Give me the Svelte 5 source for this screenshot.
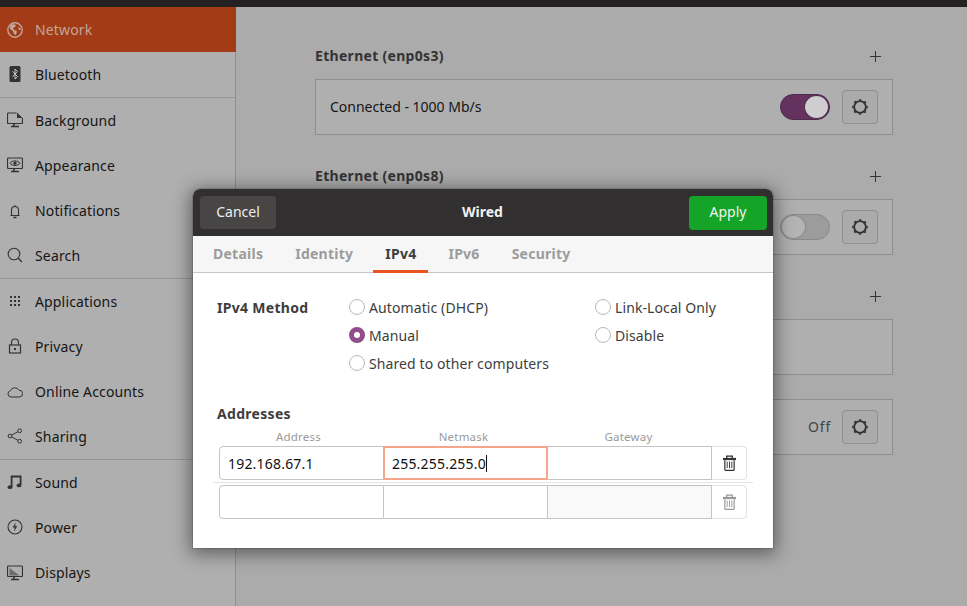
<script>
  const groups = [
    [
      { name: 'Network', icon: 'globe', active: true },
      { name: 'Bluetooth', icon: 'bluetooth', sep: true }
    ],
    [
      { name: 'Background', icon: 'background' },
      { name: 'Appearance', icon: 'appearance' },
      { name: 'Notifications', icon: 'bell' },
      { name: 'Search', icon: 'search', sep: true }
    ],
    [
      { name: 'Applications', icon: 'grid' },
      { name: 'Privacy', icon: 'lock' },
      { name: 'Online Accounts', icon: 'cloud' },
      { name: 'Sharing', icon: 'share', sep: true }
    ],
    [
      { name: 'Sound', icon: 'note' },
      { name: 'Power', icon: 'power' },
      { name: 'Displays', icon: 'display' }
    ]
  ];
  const tabs = ['Details', 'Identity', 'IPv4', 'IPv6', 'Security'];
  const methodsLeft = [
    { label: 'Automatic (DHCP)' },
    { label: 'Manual', on: true },
    { label: 'Shared to other computers' }
  ];
  const methodsRight = [{ label: 'Link-Local Only' }, { label: 'Disable' }];
</script>

{#snippet gear()}
  <svg width="18" height="18" viewBox="0 0 18 18" fill="none" stroke="#303030">
    <circle cx="9" cy="9" r="5.9" stroke-width="1.9" />
    <circle cx="9" cy="9" r="7.2" stroke-width="1.3" stroke-dasharray="2.2 3.45" stroke-dashoffset="1.1" />
  </svg>
{/snippet}

{#snippet trash()}
  <svg width="13" height="16" viewBox="0 0 14 17" fill="none" stroke="currentColor" stroke-width="1">
    <path d="M0 4.2h14" stroke-width="2.4" />
    <path d="M4 3V1h6v2" stroke-width="1.4" />
    <path d="M2 5.5v10a1 1 0 0 0 1 1h8a1 1 0 0 0 1-1v-10" stroke-width="1.3" />
    <path d="M4.5 7v7M7 7v7M9.5 7v7" />
  </svg>
{/snippet}

{#snippet sideIcon(kind)}
  <svg width="16" height="16" viewBox="0 0 16 16" fill="none" stroke="currentColor" stroke-width="1">
    {#if kind === 'globe'}
      <circle cx="8" cy="8" r="7.2" stroke-width="1.4" />
      <path d="M3 4l3-2 3 1-1 2-2 1 1 2 3 1-1 4-2-1-1-3-3-2zM11 5l2 1 1 2-2 0z" fill="currentColor" stroke="none" />
    {:else if kind === 'bluetooth'}
      <rect x="2.5" y="0" width="11" height="16" rx="1.5" fill="currentColor" stroke="none" />
      <path d="M5.5 5.2l5 5.4L8 13V3l2.5 2.4-5 5.4" stroke="#c8c8c8" />
    {:else if kind === 'background'}
      <path d="M9.5 1H1.5A1 1 0 0 0 .5 2v8.5a1 1 0 0 0 1 1h13a1 1 0 0 0 1-1V6" stroke-width="1.2" />
      <path d="M10 .5l5.5 5.5h-5.5z" fill="currentColor" stroke="none" />
      <path d="M7 12v2M4 14.5h8" stroke-width="1.6" />
    {:else if kind === 'appearance'}
      <rect x=".5" y="1" width="15" height="10.5" rx="1" stroke-width="1.2" />
      <path d="M3 6.2c2-3 8-3 10 0-2 3-8 3-10 0z" />
      <circle cx="8" cy="6.2" r="1.6" fill="currentColor" stroke="none" />
      <path d="M7 12v2M4 14.5h8" stroke-width="1.6" />
    {:else if kind === 'bell'}
      <path d="M3.5 12.5h9M4.5 12V7a3.5 3.5 0 0 1 7 0v5M8 2v1.5" stroke-width="1.1" />
      <path d="M6.5 14.5h3" stroke-width="1.6" />
    {:else if kind === 'search'}
      <circle cx="7" cy="7" r="5.8" stroke-width="1.1" />
      <path d="M11.2 11.2L15 15" stroke-width="1.3" />
    {:else if kind === 'grid'}
      <path d="M3 3h2v2h-2zM7 3h2v2h-2zM11 3h2v2h-2zM3 7h2v2h-2zM7 7h2v2h-2zM11 7h2v2h-2zM3 11h2v2h-2zM7 11h2v2h-2zM11 11h2v2h-2z" fill="currentColor" stroke="none" />
    {:else if kind === 'lock'}
      <rect x="2.5" y="7" width="11" height="8" stroke-width="1.2" />
      <path d="M4.5 7V4.5a3.5 3.5 0 0 1 7 0V7" stroke-width="1.1" />
      <rect x="7" y="10" width="2" height="2" fill="currentColor" stroke="none" />
    {:else if kind === 'cloud'}
      <path d="M4 13a3.2 3.2 0 0 1-.6-6.3A4.8 4.8 0 0 1 12 6.2 3.4 3.4 0 0 1 12.4 13z" stroke-width="1" />
    {:else if kind === 'share'}
      <circle cx="3" cy="8" r="1.9" />
      <circle cx="12.6" cy="2.8" r="1.9" />
      <circle cx="12.6" cy="13.2" r="1.9" />
      <path d="M4.7 7.1l6.2-3.4M4.7 8.9l6.2 3.4" />
    {:else if kind === 'note'}
      <path d="M4.6 13V2.5h9V11" stroke-width="1.8" />
      <ellipse cx="3" cy="13.2" rx="2.4" ry="1.9" fill="currentColor" stroke="none" />
      <ellipse cx="12" cy="11.4" rx="2.4" ry="1.9" fill="currentColor" stroke="none" />
    {:else if kind === 'power'}
      <circle cx="8" cy="8" r="7" stroke-width="1.1" />
      <path d="M8.6 3.5L5.6 8.6h2l-.4 3.9 3-5.2h-2z" fill="currentColor" stroke="none" />
    {:else if kind === 'display'}
      <rect x=".5" y="1" width="15" height="10.5" rx="1" stroke-width="1.2" />
      <path d="M2.5 3l10 7.5h-10z" fill="currentColor" stroke="none" opacity=".55" />
      <path d="M7 12v2M4 14.5h8" stroke-width="1.6" />
    {/if}
  </svg>
{/snippet}

{#snippet radio(item)}
  <div class="radio-row">
    <span class="radio" class:on={item.on}></span>
    <span>{item.label}</span>
  </div>
{/snippet}

<div class="topbar"></div>
<div class="window">
  <nav class="sidebar">
    {#each groups as group}
      {#each group as row}
        <div class="side-row" class:active={row.active} class:sep={row.sep}>
          <span class="side-icon">{@render sideIcon(row.icon)}</span>
          <span>{row.name}</span>
        </div>
      {/each}
    {/each}
  </nav>

  <main class="content">
    <section>
      <header><h2>Ethernet (enp0s3)</h2><span class="plus"></span></header>
      <div class="box">
        <span class="status">Connected - 1000 Mb/s</span>
        <span class="switch on"><i></i></span>
        <span class="gear">{@render gear()}</span>
      </div>
    </section>
    <section>
      <header><h2>Ethernet (enp0s8)</h2><span class="plus"></span></header>
      <div class="box">
        <span class="switch"><i></i></span>
        <span class="gear">{@render gear()}</span>
      </div>
    </section>
    <section>
      <header><h2></h2><span class="plus"></span></header>
      <div class="box"></div>
    </section>
    <section class="last">
      <div class="box">
        <span class="off">Off</span>
        <span class="gear">{@render gear()}</span>
      </div>
    </section>
  </main>
</div>

<div class="dialog">
  <div class="titlebar">
    <button class="cancel">Cancel</button>
    <span class="title">Wired</span>
    <button class="apply">Apply</button>
  </div>
  <div class="tabs">
    {#each tabs as tab}
      <span class="tab" class:current={tab === 'IPv4'}>{tab}</span>
    {/each}
  </div>
  <div class="body">
    <div class="method">
      <span class="label">IPv4 Method</span>
      <div class="radio-col left">
        {#each methodsLeft as item}{@render radio(item)}{/each}
      </div>
      <div class="radio-col">
        {#each methodsRight as item}{@render radio(item)}{/each}
      </div>
    </div>
    <div class="label addresses">Addresses</div>
    <div class="col-heads">
      <span>Address</span><span>Netmask</span><span>Gateway</span>
    </div>
    <div class="addr-row">
      <div class="cell first">192.168.67.1</div>
      <div class="cell focus">255.255.255.0<b class="caret"></b></div>
      <div class="cell"></div>
      <div class="del">{@render trash()}</div>
    </div>
    <div class="row-line"></div>
    <div class="addr-row">
      <div class="cell first"></div>
      <div class="cell"></div>
      <div class="cell disabled"></div>
      <div class="del dim">{@render trash()}</div>
    </div>
  </div>
</div>

<style>
  :global(body) {
    margin: 0;
    overflow: hidden;
    background: #ababab;
  }

  * {
    box-sizing: border-box;
  }

  .topbar {
    height: 7px;
    background: #232122;
  }

  .window {
    display: flex;
    height: 599px;
    font-family: "Noto Sans", sans-serif;
    font-size: 14px;
    color: #151515;
  }

  /* sidebar */
  .sidebar {
    width: 236px;
    flex: none;
    background: #afafaf;
    border-right: 1px solid #8f8f8f;
    letter-spacing: 0.15px;
  }

  .side-row {
    display: flex;
    align-items: center;
    height: 45.25px;
    padding-left: 7px;
    gap: 12px;
  }

  .side-row.sep {
    border-bottom: 1px solid #969696;
  }

  .side-row.active {
    background: #a23b16;
    color: #c0a79b;
    margin-right: -1px;
  }

  .side-icon {
    display: flex;
    color: #333;
  }

  .active .side-icon {
    color: #c0a79b;
  }

  /* network panel */
  .content {
    flex: 1;
    padding: 0 74px 0 79px;
    background: #ababab;
  }

  section {
    padding-top: 30px;
  }

  section:first-child {
    padding-top: 38px;
  }

  section.last {
    padding-top: 24px;
  }

  section header {
    display: flex;
    align-items: center;
    justify-content: space-between;
    height: 20px;
    margin-bottom: 14px;
  }

  h2 {
    margin: 0;
    font-size: 14px;
    font-weight: 700;
    letter-spacing: 0.3px;
    color: #333;
  }

  .plus {
    width: 11px;
    height: 11px;
    margin: 3px 12px 0 0;
    background:
      linear-gradient(#333, #333) center / 100% 1px no-repeat,
      linear-gradient(#333, #333) center / 1px 100% no-repeat;
  }

  .box {
    display: flex;
    align-items: center;
    justify-content: flex-end;
    height: 56px;
    padding: 0 14px;
    border: 1px solid #8e8e8e;
    background: #afafaf;
  }

  .status {
    margin: 0 auto 2px 0;
  }

  .off {
    margin: 0 11px 2px 0;
    letter-spacing: 0.8px;
    color: #444;
  }

  .switch {
    display: flex;
    width: 50px;
    height: 26px;
    margin-right: 12px;
    border: 1px solid #8a8a8a;
    border-radius: 13px;
    background: #9c9c9c;
  }

  .switch i {
    width: 25px;
    height: 24px;
    border-radius: 50%;
    background: #b4b4b4;
    border: 1px solid #8a8a8a;
  }

  .switch.on {
    justify-content: flex-end;
    background: #63325f;
    border-color: #4f2a4c;
  }

  .switch.on i {
    background: #cfcdcf;
    border-color: #4f2a4c;
  }

  .gear {
    display: flex;
    align-items: center;
    justify-content: center;
    width: 36px;
    height: 34px;
    border: 1px solid #8f8f8f;
    border-radius: 4px;
    background: #ababab;
  }

  /* dialog */
  .dialog {
    position: absolute;
    left: 193px;
    top: 189px;
    width: 580px;
    height: 359px;
    display: flex;
    flex-direction: column;
    border-radius: 7px 7px 0 0;
    background: #fff;
    box-shadow: 0 3px 18px 3px rgba(0, 0, 0, 0.45), 0 0 0 1px rgba(0, 0, 0, 0.12);
    font-family: "Noto Sans", sans-serif;
    font-size: 14px;
    color: #3d3d3d;
    overflow: hidden;
  }

  .titlebar {
    display: flex;
    align-items: center;
    justify-content: space-between;
    height: 47px;
    flex: none;
    padding: 0 6px 0 7px;
    background: #312f2f;
  }

  button {
    font: inherit;
    border: 0;
    border-radius: 4px;
    height: 33px;
    padding: 0 0 2px;
  }

  .cancel {
    width: 76px;
    background: #474645;
    color: #eee;
  }

  .apply {
    width: 78px;
    height: 34px;
    background: #14a528;
    color: #f2f2f2;
  }

  .title {
    margin-bottom: 2px;
    font-weight: 700;
    color: #f2f2f2;
  }

  .tabs {
    display: flex;
    height: 37px;
    flex: none;
    padding-left: 4px;
    background: #f6f6f6;
    border-bottom: 1px solid #c6c6c6;
  }

  .tab {
    display: flex;
    align-items: center;
    justify-content: center;
    padding: 0 12px;
    margin: 0 4px -1px;
    font-weight: 700;
    letter-spacing: 0.25px;
    color: #9c9c9c;
    border-bottom: 3px solid transparent;
  }

  .tab.current {
    color: #3d3d3d;
    border-bottom-color: #e95420;
  }

  .body {
    flex: 1;
    padding: 20px 26px 0 26px;
  }

  .label {
    font-weight: 700;
    letter-spacing: 0.3px;
  }

  .method {
    display: flex;
    height: 111px;
  }

  .method .label {
    width: 132px;
    margin-left: -2px;
    line-height: 30px;
  }

  .radio-col {
    letter-spacing: 0.1px;
  }

  .radio-col.left {
    width: 246px;
  }

  .radio-row {
    display: flex;
    align-items: center;
    gap: 4px;
    height: 28px;
  }

  .radio {
    width: 16px;
    height: 16px;
    border: 1px solid #b9b9b9;
    border-radius: 50%;
    background: #fff;
  }

  .radio.on {
    border: 5px solid #924d8b;
  }

  .addresses {
    margin-left: -2px;
    height: 20px;
    line-height: 20px;
  }

  .col-heads {
    display: grid;
    grid-template-columns: 165px 165px 165px;
    margin: 6px 0 0 -3px;
    height: 15px;
    line-height: 14px;
    font-size: 11.5px;
    letter-spacing: 0.2px;
    color: #9a9a9a;
    text-align: center;
  }

  .addr-row {
    display: grid;
    grid-template-columns: 165px 164px 164px 35px;
    height: 34px;
    margin-top: 1px;
  }

  .cell {
    display: flex;
    align-items: center;
    padding-left: 8px;
    border: 1px solid #c4c4c4;
    border-left-width: 0;
    letter-spacing: 0.2px;
    color: #111;
  }

  .cell.first {
    border-left-width: 1px;
    border-radius: 4px 0 0 4px;
  }

  .cell.focus {
    border: 2px solid #f6a58c;
    margin-left: -1px;
    padding-left: 7px;
  }

  .cell.disabled {
    background: #f9f9f9;
  }

  .caret {
    width: 1px;
    height: 17px;
    background: #111;
  }

  .del {
    display: flex;
    align-items: center;
    justify-content: center;
    border: 1px solid #e2e2e2;
    border-left: 0;
    border-radius: 0 4px 4px 0;
    color: #333;
  }

  .del.dim {
    color: #999;
  }

  .row-line {
    height: 1px;
    margin: 2px -6px 2px -6px;
    background: #e4e4e4;
  }
</style>
